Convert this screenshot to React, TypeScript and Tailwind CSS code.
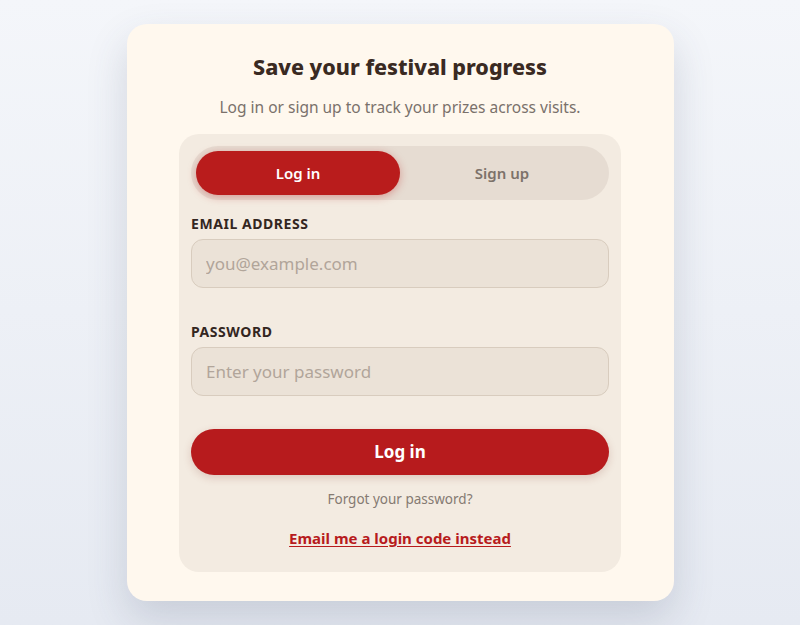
import React, { useState } from "react";

const font = { fontFamily: '"Noto Sans", "Open Sans", sans-serif' };

const App: React.FC = () => {
  const [mode, setMode] = useState<"login" | "signup">("login");

  return (
    <div
      className="min-h-screen flex items-center justify-center bg-linear-to-b from-[#f4f6fa] to-[#e6eaf2]"
      style={font}
    >
      <div className="w-[547px] bg-[#fff8ee] rounded-[20px] shadow-[0_18px_40px_rgba(60,70,100,0.18)] px-6 pt-[28px] pb-[29px]">
        <h1 className="text-center text-[21.5px] leading-[30px] font-extrabold text-[#3a2a22]">
          Save your festival progress
        </h1>
        <p className="mt-[13px] text-center text-[15.5px] leading-[24px] text-[#7a716b]">
          Log in or sign up to track your prizes across visits.
        </p>

        <div className="mt-[15px] mx-auto w-[442px] bg-[#f3ebe1] rounded-[20px] p-3 pb-[22px]">
          {/* Tabs */}
          <div className="flex bg-[#e6dcd2] rounded-full p-[5px] h-[54px]">
            <button
              onClick={() => setMode("login")}
              className={
                mode === "login"
                  ? "flex-1 rounded-full bg-[#b91c1c] text-white text-[15px] font-semibold shadow-[0_2px_8px_rgba(185,28,28,0.35)]"
                  : "flex-1 rounded-full text-[#7d726a] text-[15px] font-semibold"
              }
            >
              Log in
            </button>
            <button
              onClick={() => setMode("signup")}
              className={
                mode === "signup"
                  ? "flex-1 rounded-full bg-[#b91c1c] text-white text-[15px] font-semibold shadow-[0_2px_8px_rgba(185,28,28,0.35)]"
                  : "flex-1 rounded-full text-[#7d726a] text-[15px] font-semibold"
              }
            >
              Sign up
            </button>
          </div>

          <label className="block mt-[14px] text-[14px] leading-[20px] font-bold tracking-[0.04em] uppercase text-[#33261f]">
            Email address
          </label>
          <input
            type="email"
            placeholder="you@example.com"
            className="mt-[5px] w-full h-[49px] rounded-[12px] bg-[#ebe2d7] border border-[#d8ccbe] px-[14px] text-[17px] text-[#3a2a22] placeholder:text-[#b1a59a] outline-none"
          />

          <label className="block mt-[34px] text-[14px] leading-[20px] font-bold tracking-[0.04em] uppercase text-[#33261f]">
            Password
          </label>
          <input
            type="password"
            placeholder="Enter your password"
            className="mt-[5px] w-full h-[49px] rounded-[12px] bg-[#ebe2d7] border border-[#d8ccbe] px-[14px] text-[17px] text-[#3a2a22] placeholder:text-[#b1a59a] outline-none"
          />

          <button className="mt-[33px] w-full h-[46px] rounded-full bg-[#b71b1d] text-white text-[17px] font-bold shadow-[0_3px_8px_rgba(120,40,30,0.18)]">
            Log in
          </button>

          <p className="mt-[14px] text-center text-[13.5px] leading-[20px] text-[#857a72]">
            Forgot your password?
          </p>

          <p className="mt-[17px] text-center">
            <a
              href="#"
              className="text-[15px] leading-[20px] font-bold text-[#b71b1d] underline underline-offset-2"
            >
              Email me a login code instead
            </a>
          </p>
        </div>
      </div>
    </div>
  );
};

export default App;
